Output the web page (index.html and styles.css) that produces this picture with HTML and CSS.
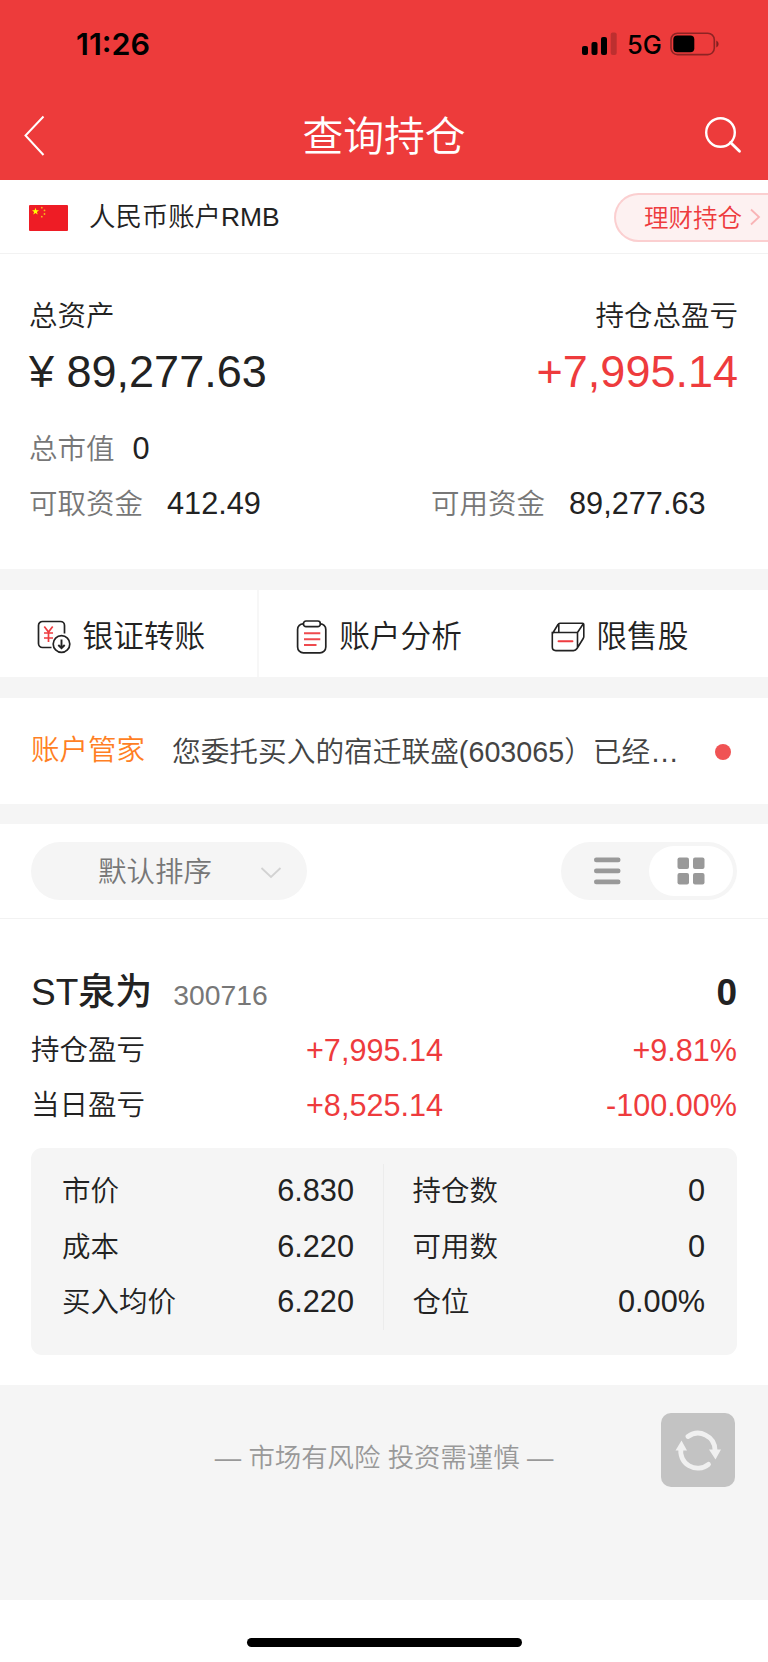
FILE: index.html
```html
<!DOCTYPE html>
<html lang="zh-CN">
<head>
	<meta charset="UTF-8">
	<meta name="viewport" content="width=device-width, initial-scale=1.0">
	<title>查询持仓</title>
	<link rel="stylesheet" href="styles.css">
</head>
<body>
	<header class="header">
		<div class="status">
			<span class="time">11:26</span>
			<svg class="signal" width="36" height="24" viewBox="0 0 36 24">
				<rect x="0" y="14" width="6" height="9" rx="2"/>
				<rect x="9.5" y="10" width="6" height="13" rx="2"/>
				<rect x="19" y="5" width="6" height="18" rx="2"/>
				<rect x="28.7" y="0.5" width="6" height="22.5" rx="2" opacity=".2"/>
			</svg>
			<span class="network">5G</span>
			<svg class="battery" width="50" height="24" viewBox="0 0 50 24">
				<rect x="1" y="1.2" width="43.3" height="21.4" rx="6.5" fill="none" stroke="#000" stroke-opacity=".4" stroke-width="1.6"/>
				<rect x="3.3" y="3.5" width="21" height="16.8" rx="4"/>
				<path d="M46.3 8.5c3 1.600 3 5.400 0 7z" opacity=".45"/>
			</svg>
		</div>
		<div class="nav">
			<svg class="back" width="24" height="44" viewBox="0 0 24 44">
				<path d="M21.500 2.500L3.500 21.500L21.500 41" fill="none" stroke="#fff" stroke-width="2"/>
			</svg>
			<h1>查询持仓</h1>
			<svg class="search" width="38" height="38" viewBox="0 0 38 38">
				<circle cx="16.500" cy="16.500" r="14.300" fill="none" stroke="#fff" stroke-width="2.400"/>
				<path d="M26.500 26.500L35.500 35.300" stroke="#fff" stroke-width="2.800" stroke-linecap="round"/>
			</svg>
		</div>
	</header>

	<div class="account">
		<svg class="flag" width="39" height="26" viewBox="0 0 39 26">
			<rect width="39" height="26" rx="1" fill="#ee1c25"/>
			<path d="M6.500 2.800l.9 2.500h2.600l-2.100 1.600.8 2.600-2.200-1.600-2.200 1.600.8-2.600L3 5.300h2.600z" fill="#ff0"/>
			<g fill="#f5b81c">
				<circle cx="12.800" cy="2.700" r=".9"/>
				<circle cx="15.500" cy="5.400" r=".9"/>
				<circle cx="15.500" cy="9" r=".9"/>
				<circle cx="12.800" cy="11.700" r=".9"/>
			</g>
		</svg>
		<span class="account-name">人民币账户RMB</span>
		<a class="wealth">
			理财持仓
			<svg width="12" height="20" viewBox="0 0 12 20">
				<path d="M2 2.500L10 10L2 17.500" fill="none" stroke="#f9b4b6" stroke-width="1.800"/>
			</svg>
		</a>
	</div>

	<section class="assets">
		<div class="row">
			<span>总资产</span>
			<span>持仓总盈亏</span>
		</div>
		<div class="row big">
			<span>¥ 89,277.63</span>
			<span class="red">+7,995.14</span>
		</div>
		<div class="sub first">
			<span class="label">总市值</span><span class="num">0</span>
		</div>
		<div class="sub">
			<div class="half"><span class="label">可取资金</span><span class="num wide">412.49</span></div>
			<div><span class="label">可用资金</span><span class="num wide">89,277.63</span></div>
		</div>
	</section>

	<nav class="tabs">
		<a class="tab">
			<svg width="34" height="34" viewBox="0 0 34 34" fill="none" stroke="#222" stroke-width="1.700">
				<path d="M14.500 27.500H5.500a4 4 0 0 1-4-4V5.500a4 4 0 0 1 4-4H23.500a4 4 0 0 1 4 4V13.500"/>
				<circle cx="24.500" cy="24" r="8.300"/>
				<path d="M24.500 19.500V28M21.300 25l3.200 3.200 3.200-3.200" stroke-width="1.900"/>
				<path d="M7.300 6.500l4.200 5.500 4.200-5.500M11.500 12V22M7 13h9M7 18h9" stroke="#ee3b3f" stroke-width="1.700"/>
			</svg>
			<span>银证转账</span>
		</a>
		<a class="tab">
			<svg width="32" height="34" viewBox="0 0 32 34" fill="none" stroke="#222" stroke-width="1.700">
				<path d="M7.500 3.800a5.500 5.500 0 0 0-5.900 5.700V27a5.800 5.800 0 0 0 5.800 5.800H24a5.800 5.800 0 0 0 5.800-5.800V9.500a5.500 5.500 0 0 0-5.900-5.700"/>
				<rect x="7.500" y="1" width="16.800" height="5.700" rx="2.500"/>
				<path d="M8 13.200H24.300M8 19.200H24.300M8 25H20.500" stroke="#ee4a4e" stroke-width="2"/>
			</svg>
			<span>账户分析</span>
		</a>
		<a class="tab">
			<svg width="34" height="30" viewBox="0 0 34 30" fill="none" stroke="#222" stroke-width="1.600">
				<path d="M1.500 11.500L7 2.500Q7.600 1.200 9 1.200H31.500Q32.800 1.200 32.800 2.500V14.500Q32.800 15.500 32.200 16.500L26 26.500Q24.700 28.600 22.500 28.600H4.800Q1.300 28.600 1.300 25.100V10.500H26.500V25.500M26.500 10.500L32.300 1.800M7.800 1.500V10.500"/>
				<path d="M7.500 19.200H21.500" stroke="#ee3b3f" stroke-width="1.900" stroke-linecap="round"/>
			</svg>
			<span>限售股</span>
		</a>
	</nav>

	<div class="notice">
		<span class="notice-title">账户管家</span>
		<span class="notice-text">您委托买入的宿迁联盛(603065）已经…</span>
		<i class="dot"></i>
	</div>

	<div class="toolbar">
		<div class="sort">
			<span>默认排序</span>
			<svg width="22" height="14" viewBox="0 0 22 14">
				<path d="M1.500 2L11 11L20.500 2" fill="none" stroke="#d2d2d2" stroke-width="1.800"/>
			</svg>
		</div>
		<div class="toggle">
			<span class="toggle-item">
				<svg width="28" height="28" viewBox="0 0 28 28" fill="#999">
					<rect x="1" y="0.500" width="26.500" height="4.800" rx="2.200"/>
					<rect x="1" y="11.500" width="26.500" height="4.800" rx="2.200"/>
					<rect x="1" y="22.500" width="26.500" height="4.800" rx="2.200"/>
				</svg>
			</span>
			<span class="toggle-item active">
				<svg width="28" height="28" viewBox="0 0 28 28" fill="#999">
					<rect x="0.500" y="0.500" width="11.500" height="11.500" rx="2"/>
					<rect x="16" y="0.500" width="11.500" height="11.500" rx="2"/>
					<rect x="0.500" y="16" width="11.500" height="11.500" rx="2"/>
					<rect x="16" y="16" width="11.500" height="11.500" rx="2"/>
				</svg>
			</span>
		</div>
	</div>

	<section class="holding">
		<div class="stock">
			<span class="stock-name">ST泉为</span>
			<span class="stock-code">300716</span>
			<span class="stock-value">0</span>
		</div>
		<div class="profit">
			<span>持仓盈亏</span>
			<span class="red">+7,995.14</span>
			<span class="red right">+9.81%</span>
		</div>
		<div class="profit">
			<span>当日盈亏</span>
			<span class="red">+8,525.14</span>
			<span class="red right">-100.00%</span>
		</div>
		<div class="detail">
			<div class="col">
				<div class="item"><span>市价</span><b>6.830</b></div>
				<div class="item"><span>成本</span><b>6.220</b></div>
				<div class="item"><span>买入均价</span><b>6.220</b></div>
			</div>
			<div class="col">
				<div class="item"><span>持仓数</span><b>0</b></div>
				<div class="item"><span>可用数</span><b>0</b></div>
				<div class="item"><span>仓位</span><b>0.00%</b></div>
			</div>
		</div>
	</section>

	<footer class="footer">
		<p>— 市场有风险 投资需谨慎 —</p>
		<button class="refresh">
			<svg width="46" height="42" viewBox="0 0 46 42">
				<g fill="none" stroke="#f0f0f0" stroke-width="4.800" stroke-linecap="round">
					<path d="M13 7.500A17 17 0 0 1 40 21"/>
					<path d="M33.500 35.300A17 17 0 0 1 6 19"/>
				</g>
				<path d="M34 20.500H46L40.500 30.500zM0.500 21.500L6.500 11.500L12 21.500z" fill="#f0f0f0"/>
			</svg>
		</button>
	</footer>
	<div class="home"><i></i></div>
</body>
</html>
```
FILE: styles.css
```css
*{ box-sizing: border-box;}
body{
	margin: 0; width: 768px; background: #fff; color: #222;
	font-family: "Liberation Sans", "Noto Sans CJK SC", sans-serif;
	font-size: 28.5px; font-weight: 350; line-height: 40px;
}
svg{ display: block; flex: none;}
.red{ color: #ee3b3d;}

/* 顶部 */
.header{ height: 180px; background: #ed3b3b;}
.status{
	display: flex; align-items: center; height: 88px;
	padding-left: 76px; color: #000; font-family: Inter, sans-serif;
}
.time{ width: 506px; font-size: 30.5px; font-weight: 600;}
.network{ width: 42px; margin-left: 9px; font-size: 25.5px; font-weight: 500; line-height: 34px; padding-top: 2px;}
.signal{ margin-top: -1px;}
.battery{ margin-left: 1px; margin-top: -1px;}
.nav{
	display: flex; align-items: center; justify-content: space-between;
	height: 92px; padding: 4px 26px 0 22px;
}
.nav h1{ margin: 2px 0 0 2px; color: #fff; font-size: 40.8px; font-weight: 350; line-height: 56px;}
.nav .back{ width: 24px; margin-right: 16px;}
.nav .search{ margin-top: -2px;}

/* 账户 */
.account{
	display: flex; align-items: center; height: 74px;
	padding-left: 29px; border-bottom: 1px solid #f2f2f2;
}
.flag{ margin-top: 2px;}
.account-name{ flex: 1; margin-left: 21px; font-size: 26.4px;}
.wealth{
	display: flex; align-items: center; justify-content: space-between;
	width: 154px; height: 49px; padding: 3px 7px 0 28px; margin-top: 1px;
	border: 2px solid #fbcfd0; border-right: 0; border-radius: 25px 0 0 25px;
	background: #fdf1f1; color: #ee3b3d; font-size: 24.5px;
}
.wealth svg{ margin-top: -4px;}

/* 资产 */
.assets{ height: 315px; padding: 42px 30px 0 29px;}
.row{ display: flex; justify-content: space-between;}
.big{ margin-top: 10px; font-size: 45px; line-height: 52px;}
.sub{ display: flex; margin-top: 15px;}
.sub.first{ margin-top: 31px;}
.half{ width: 402px;}
.label{ color: #777;}
.num{ margin-left: 18px; font-size: 30.7px;}
.num.wide{ margin-left: 24px;}

/* 功能入口 */
.tabs{
	display: flex; height: 129px;
	border: solid #f5f5f5; border-width: 21px 0;
}
.tab{
	display: flex; align-items: center; width: 254px; padding: 6px 0 0 37px;
	font-size: 30.7px;
}
.tab:nth-child(2){ border-left: 2px solid #f7f7f7; width: 258px; margin-left: 3px;}
.tab span{ margin-left: 11.5px;}
.tab:nth-child(3) span{ margin-left: 11px;}

/* 消息 */
.notice{ display: flex; align-items: center; height: 106px; padding: 1px 37px 0 31px;}
.notice-title{ width: 141px; color: #ff7f24; padding-bottom: 3px;}
.notice-text{ flex: 1; color: #444; font-size: 28.7px; white-space: nowrap;}
.dot{ width: 16px; height: 16px; border-radius: 50%; background: #f05354;}

/* 排序 */
.toolbar{
	display: flex; justify-content: space-between; height: 115px;
	padding: 18px 31px; border-top: 20px solid #f5f5f5; border-bottom: 1px solid #f2f2f2;
}
.sort{
	display: flex; align-items: center; justify-content: space-between;
	width: 276px; height: 58px; padding: 1px 25px 0 67px;
	border-radius: 29px; background: #f5f5f5; color: #777;
}
.sort svg{ margin-top: 2px;}
.toggle{
	display: flex; width: 176px; height: 58px; padding: 4px;
	border-radius: 29px; background: #f5f5f5;
}
.toggle-item{ display: flex; flex: 1; align-items: center; justify-content: center; border-radius: 25px;}
.toggle-item.active{ background: #fff;}

/* 持仓 */
.holding{ height: 466px; padding: 46px 31px 0;}
.stock{ display: flex; align-items: baseline; line-height: 55px; font-size: 37px;}
.stock-name{ font-weight: 500;}
.stock-code{ margin-left: 21px; color: #777; font-size: 28.3px;}
.stock-value{ margin-left: auto; font-size: 37px; font-weight: 700;}
.profit{
	display: grid; grid-template-columns: 275px 1fr 1fr; align-items: center;
	height: 55.3px;
}
.profit:nth-child(2){ margin-top: -1px;}
.profit .red{ font-size: 30.6px;}
.right{ text-align: right;}
.detail{
	display: flex; height: 207px; margin-top: 15px; padding: 16px 0 25px;
	border-radius: 11px; background: #f5f5f5;
}
.col{ width: 353px; padding: 0 32px 0 28.5px;}
.col:first-child{ padding: 0 29px 0 31px; border-right: 1px solid #ececec;}
.item{ display: flex; align-items: center; justify-content: space-between; height: 55.3px;}
.item b{ font-size: 30.7px; font-weight: 350;}

/* 底部 */
.footer{ position: relative; height: 215px; padding-top: 53px; background: #f5f5f5;}
.footer p{ margin: 0; color: #999; font-size: 26.4px; text-align: center;}
.refresh{
	position: absolute; top: 28px; right: 33px;
	display: flex; align-items: center; justify-content: center;
	width: 74px; height: 74px; padding: 0;
	border: 0; border-radius: 10px; background: #c3c3c3;
}
.home{ height: 62px; padding-top: 38px;}
.home i{ display: block; width: 275px; height: 9px; margin: 0 auto; border-radius: 5px; background: #000;}
```
